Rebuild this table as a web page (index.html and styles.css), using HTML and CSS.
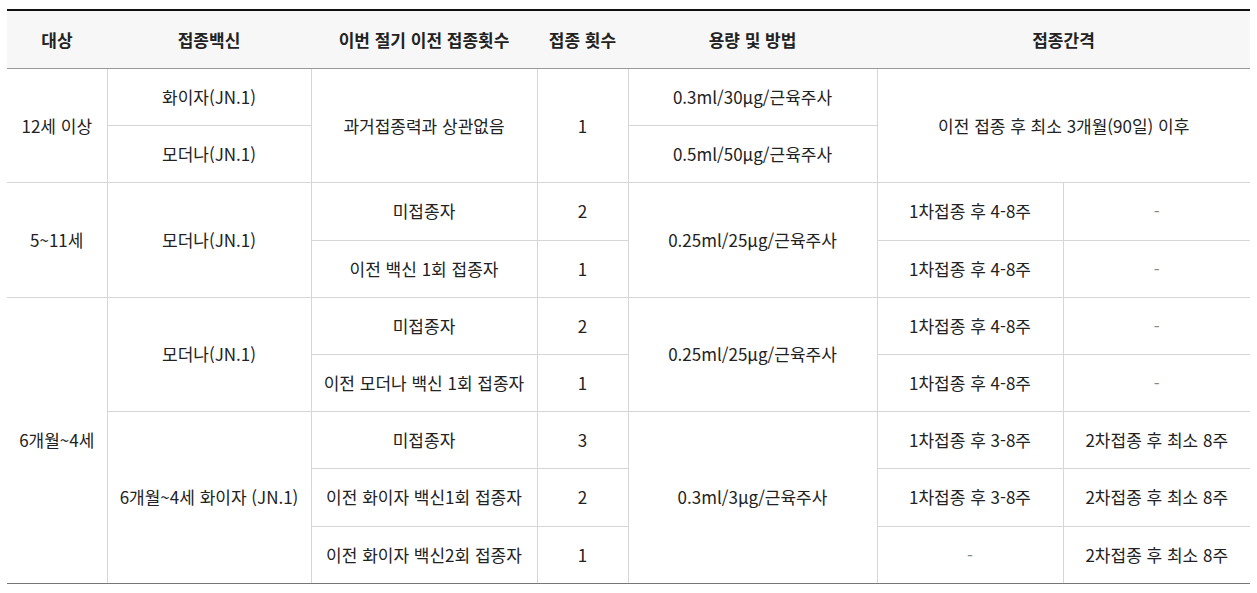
FILE: index.html
```html
<!DOCTYPE html>
<html lang="ko">
<head>
<meta charset="utf-8">
<link rel="stylesheet" href="styles.css">
</head>
<body>
<table class="vac">
  <colgroup>
    <col class="c1"><col class="c2"><col class="c3"><col class="c4"><col class="c5"><col class="c6"><col class="c7">
  </colgroup>
  <thead>
    <tr>
      <th>대상</th>
      <th>접종백신</th>
      <th>이번 절기 이전 접종횟수</th>
      <th>접종 횟수</th>
      <th>용량 및 방법</th>
      <th colspan="2">접종간격</th>
    </tr>
  </thead>
  <tbody>
    <tr>
      <td rowspan="2">12세 이상</td>
      <td>화이자(JN.1)</td>
      <td rowspan="2">과거접종력과 상관없음</td>
      <td rowspan="2">1</td>
      <td>0.3ml/30μg/근육주사</td>
      <td rowspan="2" colspan="2">이전 접종 후 최소 3개월(90일) 이후</td>
    </tr>
    <tr>
      <td>모더나(JN.1)</td>
      <td>0.5ml/50μg/근육주사</td>
    </tr>
    <tr>
      <td rowspan="2">5~11세</td>
      <td rowspan="2">모더나(JN.1)</td>
      <td>미접종자</td>
      <td>2</td>
      <td rowspan="2">0.25ml/25μg/근육주사</td>
      <td>1차접종 후 4-8주</td>
      <td class="dash">-</td>
    </tr>
    <tr>
      <td>이전 백신 1회 접종자</td>
      <td>1</td>
      <td>1차접종 후 4-8주</td>
      <td class="dash">-</td>
    </tr>
    <tr>
      <td rowspan="5" class="btm">6개월~4세</td>
      <td rowspan="2">모더나(JN.1)</td>
      <td>미접종자</td>
      <td>2</td>
      <td rowspan="2">0.25ml/25μg/근육주사</td>
      <td>1차접종 후 4-8주</td>
      <td class="dash">-</td>
    </tr>
    <tr>
      <td>이전 모더나 백신 1회 접종자</td>
      <td>1</td>
      <td>1차접종 후 4-8주</td>
      <td class="dash">-</td>
    </tr>
    <tr>
      <td rowspan="3" class="btm">6개월~4세 화이자 (JN.1)</td>
      <td>미접종자</td>
      <td>3</td>
      <td rowspan="3" class="btm">0.3ml/3μg/근육주사</td>
      <td>1차접종 후 3-8주</td>
      <td>2차접종 후 최소 8주</td>
    </tr>
    <tr>
      <td>이전 화이자 백신1회 접종자</td>
      <td>2</td>
      <td>1차접종 후 3-8주</td>
      <td>2차접종 후 최소 8주</td>
    </tr>
    <tr>
      <td>이전 화이자 백신2회 접종자</td>
      <td>1</td>
      <td class="dash">-</td>
      <td>2차접종 후 최소 8주</td>
    </tr>
  </tbody>
</table>
</body>
</html>
```

FILE: styles.css
```css
html, body {
  margin: 0;
  padding: 0;
  background: #fff;
}
body {
  padding: 9px 7px 0 7px;
  font-family: "Noto Sans CJK KR", "Noto Sans", sans-serif;
  color: #222;
}
.vac {
  width: 1243px;
  border-collapse: collapse;
  table-layout: fixed;
  border-top: 2px solid #111;
  font-size: 17px;
}
.c1 { width: 100px; }
.c2 { width: 204px; }
.c3 { width: 226px; }
.c4 { width: 91px; }
.c5 { width: 249px; }
.c6 { width: 186px; }
.c7 { width: 187px; }
.vac th {
  background: #f7f7f7;
  font-weight: 700;
  height: 57px;
  padding: 0;
  border-bottom: 1px solid #999;
  text-align: center;
  vertical-align: middle;
  color: #222;
}
.vac td {
  height: 56.2px;
  padding: 0;
  border: 1px solid #d6d6d6;
  text-align: center;
  vertical-align: middle;
  line-height: 22px;
}
.vac tbody tr:last-child td,
.vac td.btm { border-bottom: 1px solid #777; }
.vac td:first-child { border-left: none; }
.vac tr td:last-child { border-right: none; }
.vac td.dash { color: #888; }
```
